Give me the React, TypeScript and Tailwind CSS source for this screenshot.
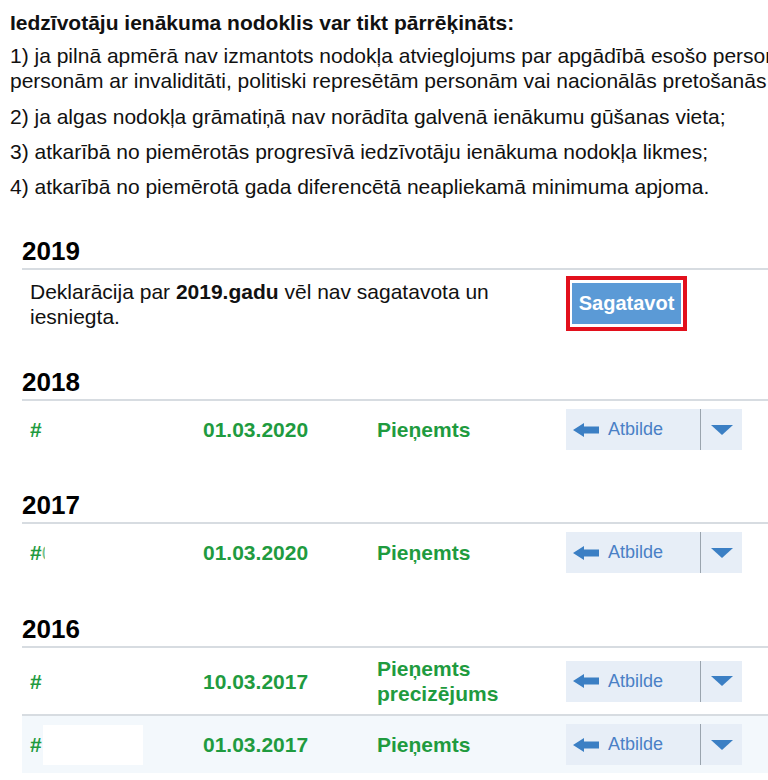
import type { ReactNode } from "react";

const FONT = { fontFamily: '"Liberation Sans", Arial, sans-serif' };

function ArrowLeft() {
  return (
    <svg width="26" height="14" viewBox="0 0 26 14" className="shrink-0">
      <path d="M0 7L11 0V3.5H26V10.5H11V14Z" fill="#3b7fc4" />
    </svg>
  );
}

function Caret() {
  return (
    <svg width="22" height="10" viewBox="0 0 22 10">
      <path d="M0 0H22L11 10Z" fill="#3b7fc4" />
    </svg>
  );
}

function AtbildeButton() {
  return (
    <div className="flex h-[41px] w-[176px] bg-[#e7eef7]">
      <div className="flex w-[134px] items-center gap-[9px] pl-[7px]">
        <ArrowLeft />
        <span className="text-[18px] font-normal text-[#4a80c6]">Atbilde</span>
      </div>
      <div className="w-px bg-[#9aa4ae]" />
      <div className="flex flex-1 items-center justify-center">
        <Caret />
      </div>
    </div>
  );
}

function Row({
  num,
  date,
  status,
  className = "",
}: {
  num: ReactNode;
  date: string;
  status: ReactNode;
  className?: string;
}) {
  return (
    <div
      className={`grid grid-cols-[173px_174px_189px_176px] items-center py-2 pl-2 text-[21px] leading-[25px] font-bold text-[#1f9b3f] ${className}`}
    >
      <div className="flex items-center">{num}</div>
      <div>{date}</div>
      <div>{status}</div>
      <AtbildeButton />
    </div>
  );
}

function YearHeading({ year }: { year: string }) {
  return (
    <h2 className="border-b-2 border-[#d7dce1] pb-[2px] text-[26px] leading-[30px] font-bold text-black">
      {year}
    </h2>
  );
}

export default function App() {
  return (
    <div
      className="h-[780px] w-[768px] overflow-hidden bg-white text-[21px] leading-[25px] text-[#111]"
      style={FONT}
    >
      <div className="pl-[10px] pt-[10px]">
        <p className="font-bold">Iedzīvotāju ienākuma nodoklis var tikt pārrēķināts:</p>
        <p className="mt-[8px] whitespace-nowrap">
          1) ja pilnā apmērā nav izmantots nodokļa atvieglojums par apgādībā esošo personu, papildu atvieglojumi
          <br />
          personām ar invaliditāti, politiski represētām personām vai nacionālās pretošanās kustības dalībniekiem;
        </p>
        <p className="mt-[11px] whitespace-nowrap">
          2) ja algas nodokļa grāmatiņā nav norādīta galvenā ienākumu gūšanas vieta;
        </p>
        <p className="mt-[10px] whitespace-nowrap">
          3) atkarībā no piemērotās progresīvā iedzīvotāju ienākuma nodokļa likmes;
        </p>
        <p className="mt-[10px] whitespace-nowrap">
          4) atkarībā no piemērotā gada diferencētā neapliekamā minimuma apjoma.
        </p>
      </div>

      <div className="ml-[22px] mt-[37px]">
        <section>
          <YearHeading year="2019" />
          <div className="flex items-center pl-2 pt-[6px]">
            <p className="w-[536px] pr-10">
              Deklarācija par <b>2019.gadu</b> vēl nav sagatavota un iesniegta.
            </p>
            <div className="border-4 border-[#e2101c] bg-white p-[2px]">
              <button className="h-[43px] w-[109px] border-y border-white bg-[#5b9ad6] text-[20px] font-bold text-white">
                Sagatavot
              </button>
            </div>
          </div>
        </section>

        <section className="mt-[36px]">
          <YearHeading year="2018" />
          <Row num="#" date="01.03.2020" status="Pieņemts" />
        </section>

        <section className="mt-[32px]">
          <YearHeading year="2017" />
          <Row
            num={
              <>
                #
                <span className="inline-block w-[3px] overflow-hidden font-normal opacity-60">0</span>
              </>
            }
            date="01.03.2020"
            status="Pieņemts"
          />
        </section>

        <section className="mt-[33px]">
          <YearHeading year="2016" />
          <Row
            num="#"
            date="10.03.2017"
            status={
              <>
                Pieņemts
                <br />
                precizējums
              </>
            }
          />
          <Row
            className="border-t-2 border-[#d7dce1] bg-[#f3f8fc]"
            num={
              <>
                #
                <span className="ml-px inline-block h-[40px] w-[100px] bg-white" />
              </>
            }
            date="01.03.2017"
            status="Pieņemts"
          />
        </section>
      </div>
    </div>
  );
}
